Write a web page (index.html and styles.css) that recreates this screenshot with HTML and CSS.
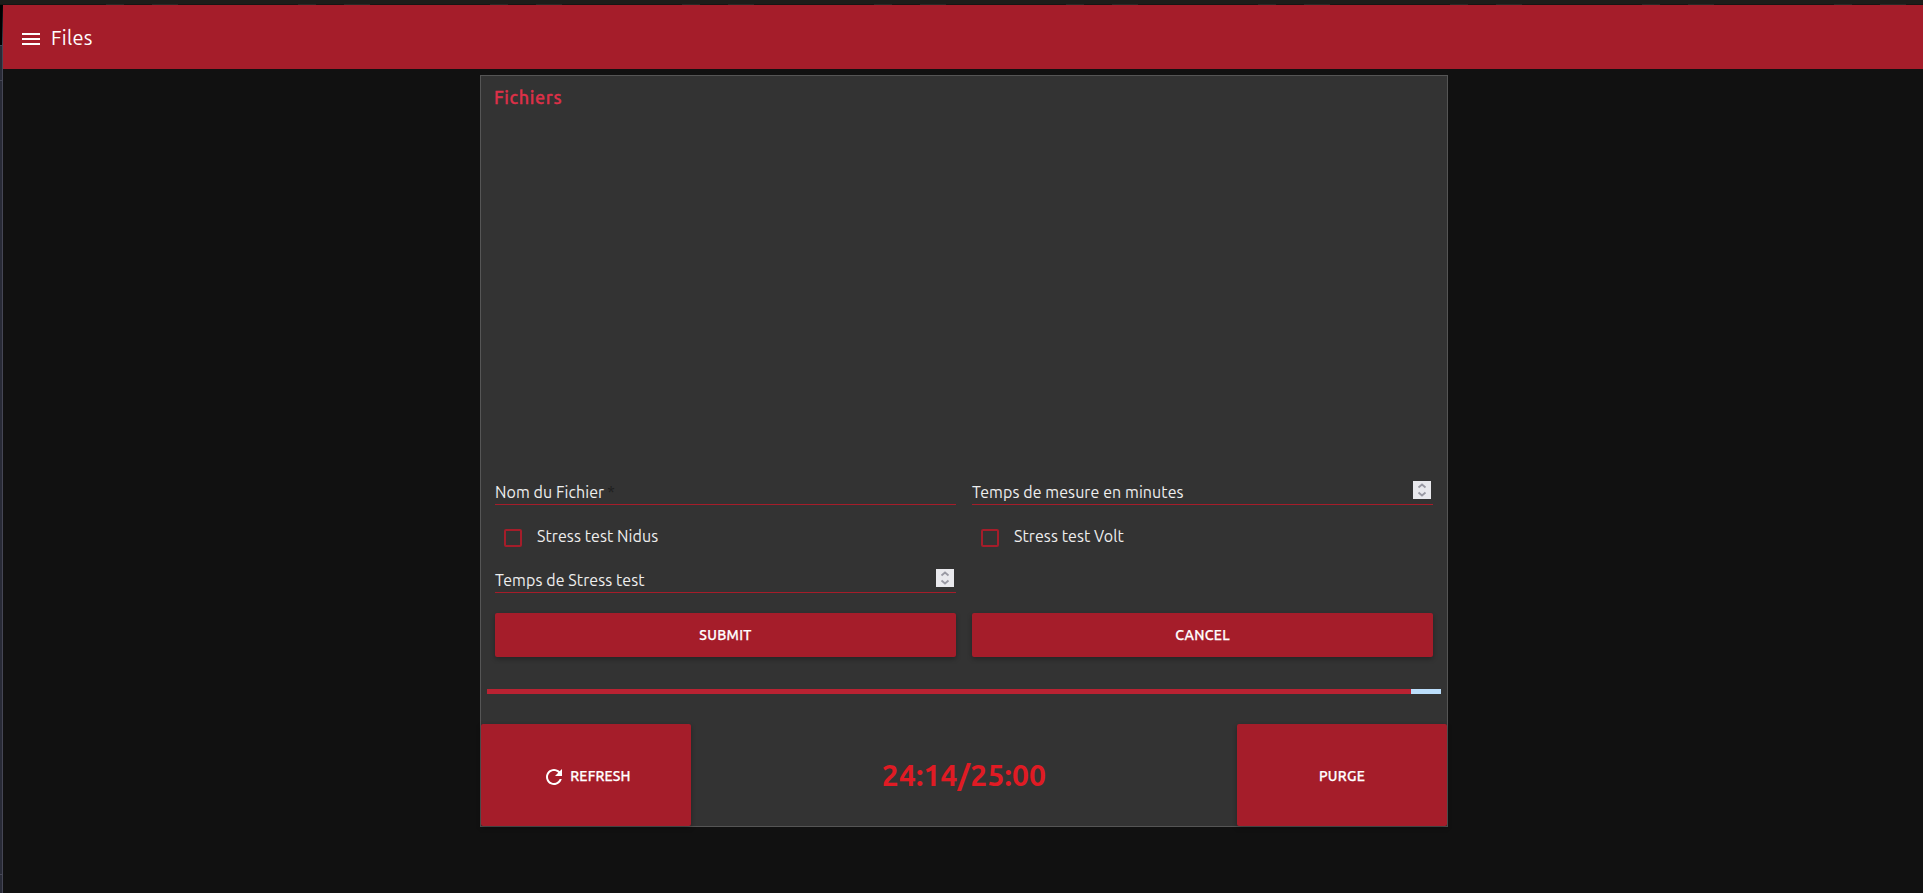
FILE: index.html
```html
<!DOCTYPE html>
<html lang="fr">
<head>
<meta charset="utf-8">
<title>Files</title>
<link rel="stylesheet" href="styles.css">
</head>
<body>
<div class="desktop-top"></div>
<div class="workspace">
  <div class="edge"></div>
  <div class="app">
    <header class="toolbar">
      <svg class="menu-icon" width="18" height="12" viewBox="0 0 18 12"><path d="M0 0h18v2H0zM0 5h18v2H0zM0 10h18v2H0z" fill="#fff"/></svg>
      <span class="toolbar-title">Files</span>
    </header>
    <main class="panel">
      <h3 class="panel-title">Fichiers</h3>
      <form class="form">
        <div class="field"><span>Nom du Fichier</span><span class="required">*</span></div>
        <div class="field"><span>Temps de mesure en minutes</span>
          <svg class="spinner" width="18" height="18" viewBox="0 0 18 18"><path d="M5.500 6.500 9 3.500l3.500 3M5.500 11.500 9 14.500l3.500-3" fill="none" stroke="#9999a3" stroke-width="1.800"/></svg></div>
        <div class="option"><span class="checkbox"></span><span>Stress test Nidus</span></div>
        <div class="option"><span class="checkbox"></span><span>Stress test Volt</span></div>
        <div class="field"><span>Temps de Stress test</span>
          <svg class="spinner" width="18" height="18" viewBox="0 0 18 18"><path d="M5.500 6.500 9 3.500l3.500 3M5.500 11.500 9 14.500l3.500-3" fill="none" stroke="#9999a3" stroke-width="1.800"/></svg></div>
        <div></div>
        <button type="button" class="button">SUBMIT</button>
        <button type="button" class="button">CANCEL</button>
      </form>
      <div class="progress"><div class="progress-value"></div></div>
      <footer class="actions">
        <button type="button" class="button action refresh">
          <svg class="refresh-icon" width="16" height="16" viewBox="4 4 16 16"><path d="M17.650 6.350C16.200 4.900 14.210 4 12 4c-4.420 0-7.990 3.580-7.990 8s3.570 8 7.990 8c3.730 0 6.840-2.550 7.730-6h-2.080c-.82 2.330-3.040 4-5.650 4-3.310 0-6-2.690-6-6s2.690-6 6-6c1.660 0 3.140.69 4.220 1.780L13 11h7V4l-2.350 2.350z" fill="#fff"/></svg>
          <span>REFRESH</span></button>
        <div class="timer">24:14/25:00</div>
        <button type="button" class="button action">PURGE</button>
      </footer>
    </main>
  </div>
</div>
</body>
</html>
```
FILE: styles.css
```css
* { box-sizing: border-box; }
body {
  margin: 0;
  height: 893px;
  overflow: hidden;
  background: #111;
  color: #eee;
  font: 16px/24px Ubuntu, "Noto Sans", sans-serif;
  letter-spacing: .08px;
}
.desktop-top {
  height: 5px;
  background:
    repeating-linear-gradient(90deg, #171614 0 106px, #292825 106px 124px, #171614 124px 152px, #292825 152px 178px, #171614 178px 192px) 0 4px / 100% 1px no-repeat,
    #1e1d1a;
}
.workspace { display: flex; height: 888px; }
.edge {
  width: 3px;
  border-top: 40px solid #000;
  border-right: 1px solid #454655;
  background: linear-gradient(#454655 0 1px, #282a36 1px 35px, #454655 35px 36px, #282a36 36px 829px, #454655 829px 830px, #282a36 830px);
}
.app { flex: 1; }
.toolbar {
  height: 64px;
  padding-left: 19px;
  display: flex;
  align-items: center;
  background: #a51d2a;
  color: #fff;
}
.menu-icon { margin: 4px 11px 0 0; }
.toolbar-title { padding-top: 2px; font-size: 20px; letter-spacing: .3px; }
.panel {
  width: 968px;
  height: 752px;
  margin: 6px 0 0 477px;
  border: 1px solid #555;
  background: #333;
}
.panel-title {
  margin: 0;
  padding: 9px 0 0 13px;
  height: 394px;
  font-size: 18px;
  font-weight: 500;
  letter-spacing: .6px;
  -webkit-text-stroke: .35px;
  color: #dc3048;
}
.form {
  display: grid;
  grid-template-columns: 461px 461px;
  column-gap: 16px;
  grid-template-rows: 35px 53px 35px 64px;
  padding-left: 14px;
}
.field {
  display: flex;
  align-items: flex-end;
  height: 35px;
  border-bottom: 1px solid #a51d2a;
}
.required { margin-left: 3px; color: #202020; }
.spinner { margin: 0 2px 5px auto; background: #e9e9ed; }
.option { display: flex; align-items: flex-start; padding: 19px 0 0 9px; }
.checkbox { width: 18px; height: 18px; margin: 5px 15px 0 0; border: 2px solid #a51d2a; border-radius: 2px; }
.button {
  display: flex;
  align-items: center;
  justify-content: center;
  align-self: end;
  height: 44px;
  padding: 0;
  border: 0;
  border-radius: 2px;
  background: #a51d2a;
  color: #fff;
  font: 500 14px/20px Ubuntu, "Noto Sans", sans-serif;
  letter-spacing: .3px;
  -webkit-text-stroke: .25px;
  box-shadow: 0 2px 5px rgba(0, 0, 0, .3);
}
.progress { width: 954px; height: 5px; margin: 32px 0 0 6px; background: #bbdefb; }
.progress-value { width: 924px; height: 5px; background: #ba2232; }
.actions { display: flex; justify-content: space-between; margin-top: 30px; }
.action { width: 210px; height: 102px; padding-top: 2px; }
.refresh { padding-left: 5px; letter-spacing: .2px; }
.refresh-icon { margin: 2px 8px 0 0; }
.timer { align-self: center; font-size: 30px; font-weight: 700; line-height: 40px; letter-spacing: .15px; color: #e01b24; }
```
